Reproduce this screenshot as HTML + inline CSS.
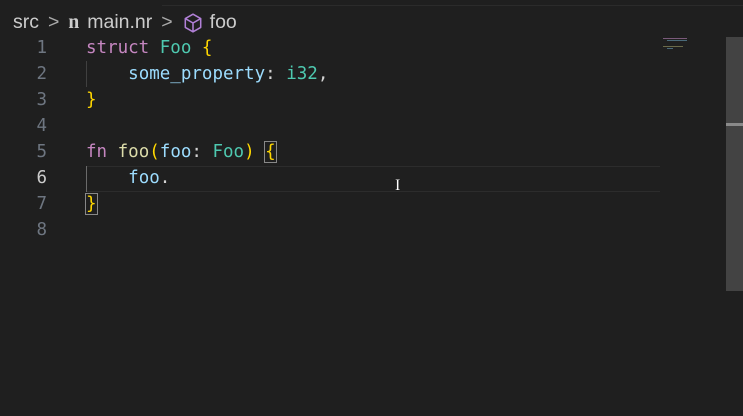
<!DOCTYPE html>
<html><head><style>
body{margin:0;width:743px;height:416px;background:#1f1f1f;overflow:hidden;position:relative;font-family:"DejaVu Sans Mono","Liberation Mono",monospace}
.bc{position:absolute;top:11px;left:13px;font:19.5px "Liberation Sans",sans-serif;color:#cccccc;white-space:nowrap;display:flex;align-items:center}
.topline{position:absolute;left:162px;right:0;top:5px;height:1px;background:#2b2b2b}
.ln{position:absolute;left:0;width:47px;text-align:right;color:#6e7681;font-size:17.5px;line-height:26px}
.code{position:absolute;left:86px;font-size:17.5px;line-height:26px;color:#d4d4d4;white-space:pre}
.cur{position:absolute;left:86px;width:574px;top:166px;height:24px;border-top:1px solid #2c2c2c;border-bottom:1px solid #2c2c2c}
.k{color:#c586c0}.t{color:#4ec9b0}.b{color:#ffd700}.v{color:#9cdcfe}.f{color:#dcdcaa}
.m{outline:1px solid #888;outline-offset:0}
.guide{position:absolute;left:86px;width:1px;background:#404040}
.sb{position:absolute;left:726px;top:37px;width:17px;height:254px;background:#434343}
</style></head><body>
<div class="topline"></div>
<div class="bc">src<span style="margin:0 9px;color:#aaa">&gt;</span><span style="font-family:'Liberation Serif',serif;font-weight:bold;margin-right:8px">n</span>main.nr<span style="margin:0 9px;color:#aaa">&gt;</span><svg width="22" height="22" viewBox="0 0 20 20" style="margin-right:6px"><path d="M10 2 L17 6 V14 L10 18 L3 14 V6 Z M3 6 L10 10 L17 6 M10 10 V18" fill="none" stroke="#b180d7" stroke-width="1.4" stroke-linejoin="round"/></svg>foo</div>
<div class="cur"></div>
<div class="guide" style="top:61px;height:26px"></div>
<div class="guide" style="top:166px;height:26px;background:#6a6a6a"></div>
<div class="ln" style="top:35px">1<br>2<br>3<br>4<br>5<br><span style="color:#ccc">6</span><br>7<br>8</div>
<div class="code" style="top:35px"><span class="k">struct</span> <span class="t">Foo</span> <span class="b">{</span>
    <span class="v">some_property</span>: <span class="t">i32</span>,
<span class="b">}</span>

<span class="k">fn</span> <span class="f">foo</span><span class="b">(</span><span class="v">foo</span>: <span class="t">Foo</span><span class="b">)</span> <span class="b m">{</span>
    <span class="v">foo</span>.
<span class="b m">}</span>
</div>
<div style="position:absolute;left:395px;top:177px;color:#fff;font:16px 'Liberation Serif',serif;text-shadow:0 0 1px #000">I</div>
<div class="sb"></div>
<div style="position:absolute;left:726px;top:123px;width:17px;height:3px;background:#8a8a8a"></div>
<div style="position:absolute;left:663px;top:38px;width:24px;height:1px;background:#7a5a7a"></div>
<div style="position:absolute;left:667px;top:40px;width:20px;height:1px;background:#4a6a7a"></div>
<div style="position:absolute;left:663px;top:46px;width:20px;height:1px;background:#6a6a4a"></div>
<div style="position:absolute;left:667px;top:48px;width:6px;height:1px;background:#4a6a7a"></div>
</body></html>
